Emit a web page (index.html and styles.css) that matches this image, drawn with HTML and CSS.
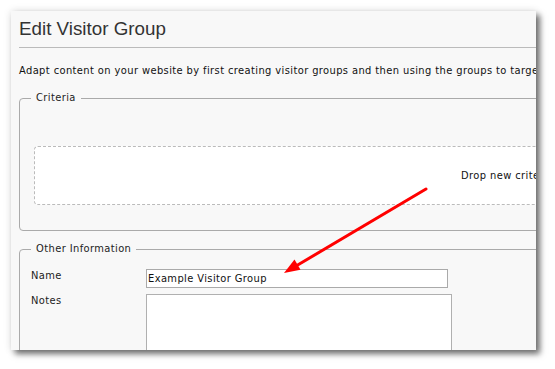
FILE: index.html
```html
<!DOCTYPE html>
<html>
<head>
<meta charset="utf-8">
<link rel="stylesheet" href="styles.css">
</head>
<body>
<div class="stage">
  <div class="panel">
    <div class="content">
      <h1 class="title">Edit Visitor Group</h1>
      <p class="intro">Adapt content on your website by first creating visitor groups and then using the groups to target content to visitors.</p>
      <fieldset class="group criteria">
        <legend>Criteria</legend>
        <div class="dropzone">Drop new criteria here</div>
      </fieldset>
      <fieldset class="group info">
        <legend>Other Information</legend>
        <div class="row">
          <label class="label" for="name">Name</label>
          <input class="text-input" id="name" type="text" value="Example Visitor Group">
        </div>
        <div class="row">
          <label class="label" for="notes">Notes</label>
          <textarea class="notes" id="notes"></textarea>
        </div>
      </fieldset>
    </div>
  </div>
  <svg class="arrow" width="555" height="369" viewBox="0 0 555 369">
    <line x1="426" y1="189" x2="296" y2="266" stroke="#ff0000" stroke-width="3" stroke-linecap="round"/>
    <polygon points="284,273 300.5,269.7 294.5,259.5" fill="#ff0000"/>
  </svg>
</div>
</body>
</html>
```
FILE: styles.css
```css
html, body {
  margin: 0;
  padding: 0;
  background: #ffffff;
}

body {
  font-family: "DejaVu Sans Condensed", "DejaVu Sans", sans-serif;
  font-size: 11px;
  letter-spacing: 0.4px;
  color: #1a1a1a;
}

.stage {
  position: relative;
  width: 555px;
  height: 369px;
  padding: 11px 0 0 11px;
  box-sizing: border-box;
  overflow: hidden;
}

.panel {
  width: 525px;
  height: 339px;
  overflow: hidden;
  background: #f8f8f8;
  box-shadow: 4px 4px 6px rgba(0, 0, 0, 0.55), 0 0 8px rgba(0, 0, 0, 0.12);
}

.content {
  width: 1040px;
  padding: 0 0 0 8px;
}

.title {
  margin: 0;
  padding: 6px 0 6px 0;
  font-family: "Liberation Sans", Arial, sans-serif;
  font-weight: normal;
  font-size: 18.8px;
  letter-spacing: 0;
  line-height: 24px;
  color: #333333;
  border-bottom: 1px solid #bbbbbb;
}

.intro {
  margin: 16px 0 0 0;
  line-height: 14px;
  white-space: nowrap;
  color: #111111;
}

.group {
  margin: 0;
  padding: 0 0 0 11px;
  border: 1px solid #aaaaaa;
  border-radius: 4px;
}

.group legend {
  padding: 0 5px;
  line-height: 14px;
  color: #222222;
}

.criteria {
  margin-top: 13px;
}

.dropzone {
  width: 972px;
  height: 57px;
  margin: 41px 0 25px 3px;
  border: 1px dashed #bbbbbb;
  border-radius: 4px;
  background: #ffffff;
  display: flex;
  align-items: center;
  justify-content: center;
  color: #111111;
}

.info {
  margin-top: 11px;
  padding-top: 13px;
  height: 200px;
}

.row {
  display: flex;
  align-items: flex-start;
  margin-bottom: 6px;
}

.label {
  width: 115px;
  line-height: 14px;
  color: #222222;
}

.text-input {
  box-sizing: border-box;
  width: 302px;
  height: 19px;
  margin: 0;
  padding: 0 1px;
  border: 1px solid #aaaaaa;
  background: #ffffff;
  font-family: "DejaVu Sans Condensed", "DejaVu Sans", sans-serif;
  font-size: 11px;
  letter-spacing: 0.4px;
  color: #111111;
  outline: none;
}

.notes {
  box-sizing: border-box;
  width: 306px;
  height: 80px;
  margin: 0;
  padding: 0;
  border: 1px solid #b0b0b0;
  background: #ffffff;
  resize: none;
}

.arrow {
  position: absolute;
  left: 0;
  top: 0;
  pointer-events: none;
}
```
